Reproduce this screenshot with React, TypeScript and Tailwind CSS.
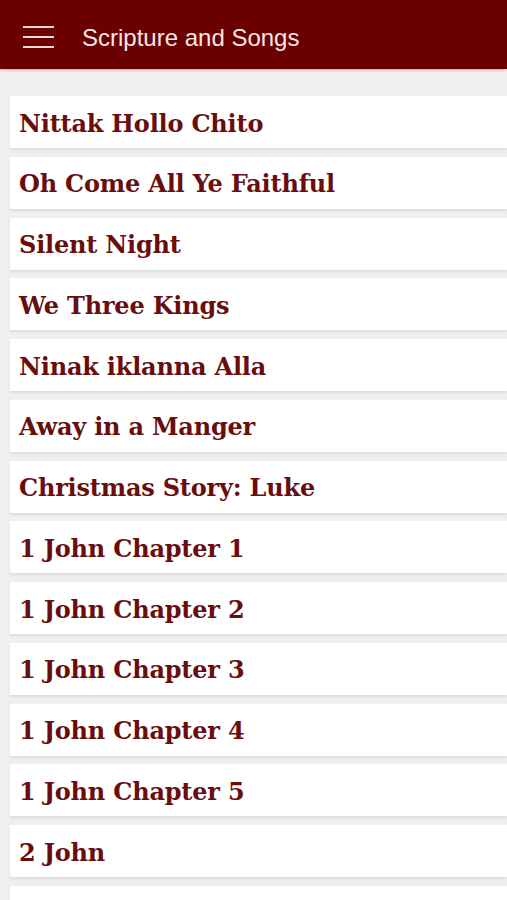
import React from "react";

const items = [
  "Nittak Hollo Chito",
  "Oh Come All Ye Faithful",
  "Silent Night",
  "We Three Kings",
  "Ninak iklanna Alla",
  "Away in a Manger",
  "Christmas Story: Luke",
  "1 John Chapter 1",
  "1 John Chapter 2",
  "1 John Chapter 3",
  "1 John Chapter 4",
  "1 John Chapter 5",
  "2 John",
  "3 John",
];

export default function App() {
  return (
    <div className="w-[507px] h-[900px] overflow-hidden bg-[#efefef] flex flex-col">
      <header className="h-[69px] shrink-0 bg-[#6b0000] flex items-center pt-[6px] shadow-[0_1px_3px_rgba(0,0,0,0.25)] relative z-10">
        <div className="ml-[23px] w-[31px] flex flex-col gap-[8px] mt-[-2px]">
          <div className="h-[2px] bg-[#f0d6d6]" />
          <div className="h-[2px] bg-[#f0d6d6]" />
          <div className="h-[2px] bg-[#f0d6d6]" />
        </div>
        <div
          className="ml-[28px] text-[24px] text-[#f6e6e6] leading-none"
          style={{ fontFamily: '"Liberation Sans", Arial, sans-serif' }}
        >
          Scripture and Songs
        </div>
      </header>
      <div className="pt-[27px] pl-[10px] flex flex-col gap-[8.75px]">
        {items.map((t) => (
          <div
            key={t}
            className="h-[52px] shrink-0 bg-white flex items-center pl-[9px] pt-[3px] shadow-[0_2px_2px_rgba(0,0,0,0.08)]"
          >
            <span
              className="text-[24px] font-bold text-[#690d0d] leading-none tracking-[-0.2px]"
              style={{ fontFamily: '"DejaVu Serif", Georgia, serif' }}
            >
              {t}
            </span>
          </div>
        ))}
      </div>
    </div>
  );
}
